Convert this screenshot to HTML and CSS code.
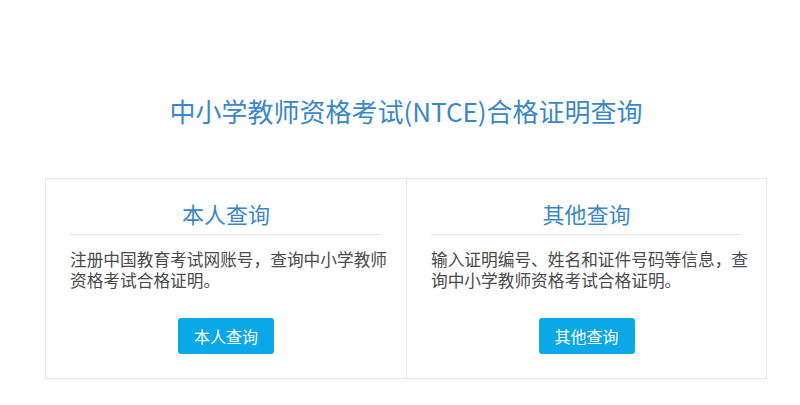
FILE: index.html
```html
<!DOCTYPE html>
<html lang="zh-CN">
<head>
<meta charset="utf-8">
<title>中小学教师资格考试(NTCE)合格证明查询</title>
<link rel="stylesheet" href="styles.css">
</head>
<body>
<div class="page">
  <h1 class="title">中小学教师资格考试(NTCE)合格证明查询</h1>
  <div class="panel">
    <div class="cell">
      <h2 class="cell-title">本人查询</h2>
      <p class="cell-text">注册中国教育考试网账号，查询中小学教师资格考试合格证明。</p>
      <div class="cell-action"><a class="btn" href="#">本人查询</a></div>
    </div>
    <div class="cell">
      <h2 class="cell-title">其他查询</h2>
      <p class="cell-text">输入证明编号、姓名和证件号码等信息，查询中小学教师资格考试合格证明。</p>
      <div class="cell-action"><a class="btn" href="#">其他查询</a></div>
    </div>
  </div>
</div>
</body>
</html>
```
FILE: styles.css
```css
html, body {
  margin: 0;
  padding: 0;
  background: #ffffff;
}
body {
  font-family: "Noto Sans CJK SC", "Noto Sans", "Liberation Sans", sans-serif;
  color: #4a4a4a;
}
.page {
  margin-left: 45px;
  width: 722px;
  padding-top: 95px;
}
.title {
  margin: 0;
  font-size: 26px;
  line-height: 32px;
  font-weight: normal;
  color: #3a87c8;
  text-align: center;
}
.panel {
  margin-top: 51px;
  display: grid;
  grid-template-columns: 1fr 1fr;
  border: 1px solid #e6e6e6;
  box-sizing: border-box;
  height: 201px;
}
.cell {
  padding: 21px 0 0 0;
  display: flex;
  flex-direction: column;
}
.cell + .cell {
  border-left: 1px solid #e6e6e6;
}
.cell-title {
  margin: 0 24px 0 24px;
  padding-bottom: 8px;
  border-bottom: 1px solid #e6e6e6;
  font-size: 22px;
  line-height: 26px;
  font-weight: normal;
  color: #3a87c8;
  text-align: center;
}
.cell-text {
  margin: 14px 0 0 0;
  padding: 0 8px 0 24px;
  font-size: 16.7px;
  line-height: 21px;
  color: #4a4a4a;
}
.cell-action {
  margin-top: 27px;
  display: flex;
  justify-content: center;
}
.btn {
  display: block;
  width: 96px;
  height: 36px;
  line-height: 36px;
  background: #0aa8e6;
  color: #ffffff;
  border-radius: 3px;
  text-align: center;
  font-size: 16px;
  text-decoration: none;
}
```
